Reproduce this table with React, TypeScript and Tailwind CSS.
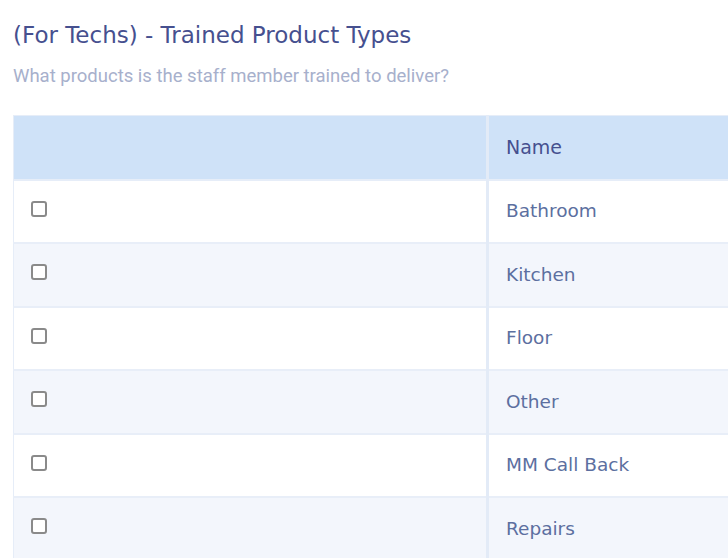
const products = ["Bathroom", "Kitchen", "Floor", "Other", "MM Call Back", "Repairs"];

const heading = { fontFamily: '"DejaVu Sans", "Open Sans", sans-serif' };

export default function App() {
  return (
    <div className="min-h-screen overflow-hidden bg-white pl-[13px] pt-[21px]">
      <h2 className="text-[23px] leading-[28px] text-[#46508f]" style={heading}>
        (For Techs) - Trained Product Types
      </h2>
      <p className="mt-[16px] text-[18.5px] leading-[22px] text-[#a7b0cc]" style={{ fontFamily: "Roboto, sans-serif" }}>
        What products is the staff member trained to deliver?
      </p>

      <table className="mt-[28px] w-[800px] border-collapse border-l border-t border-[#e6edf8]" style={heading}>
        <thead>
          <tr className="h-[64px] bg-[#cfe2f8] border-b-2 border-[#e6edf8]">
            <th className="w-[474px] border-r-[3px] border-[#e3ebf7]"></th>
            <th className="pl-[17px] text-left text-[19px] font-normal text-[#46508f]">Name</th>
          </tr>
        </thead>
        <tbody>
          {products.map((p, i) => (
            <tr key={p} className={`h-[63.5px] border-b-2 border-[#e8eef8] ${i % 2 === 0 ? "bg-white" : "bg-[#f3f6fc]"}`}>
              <td className="border-r-[3px] border-[#e3ebf7] pl-[17px]">
                <input type="checkbox" className="-mt-[5px] block h-[16px] w-[16px] appearance-none rounded-[3px] border-2 border-[#8a8a8a] bg-white" />
              </td>
              <td className="pl-[17px] text-[18.5px] text-[#5c6fa0]">{p}</td>
            </tr>
          ))}
        </tbody>
      </table>
    </div>
  );
}
